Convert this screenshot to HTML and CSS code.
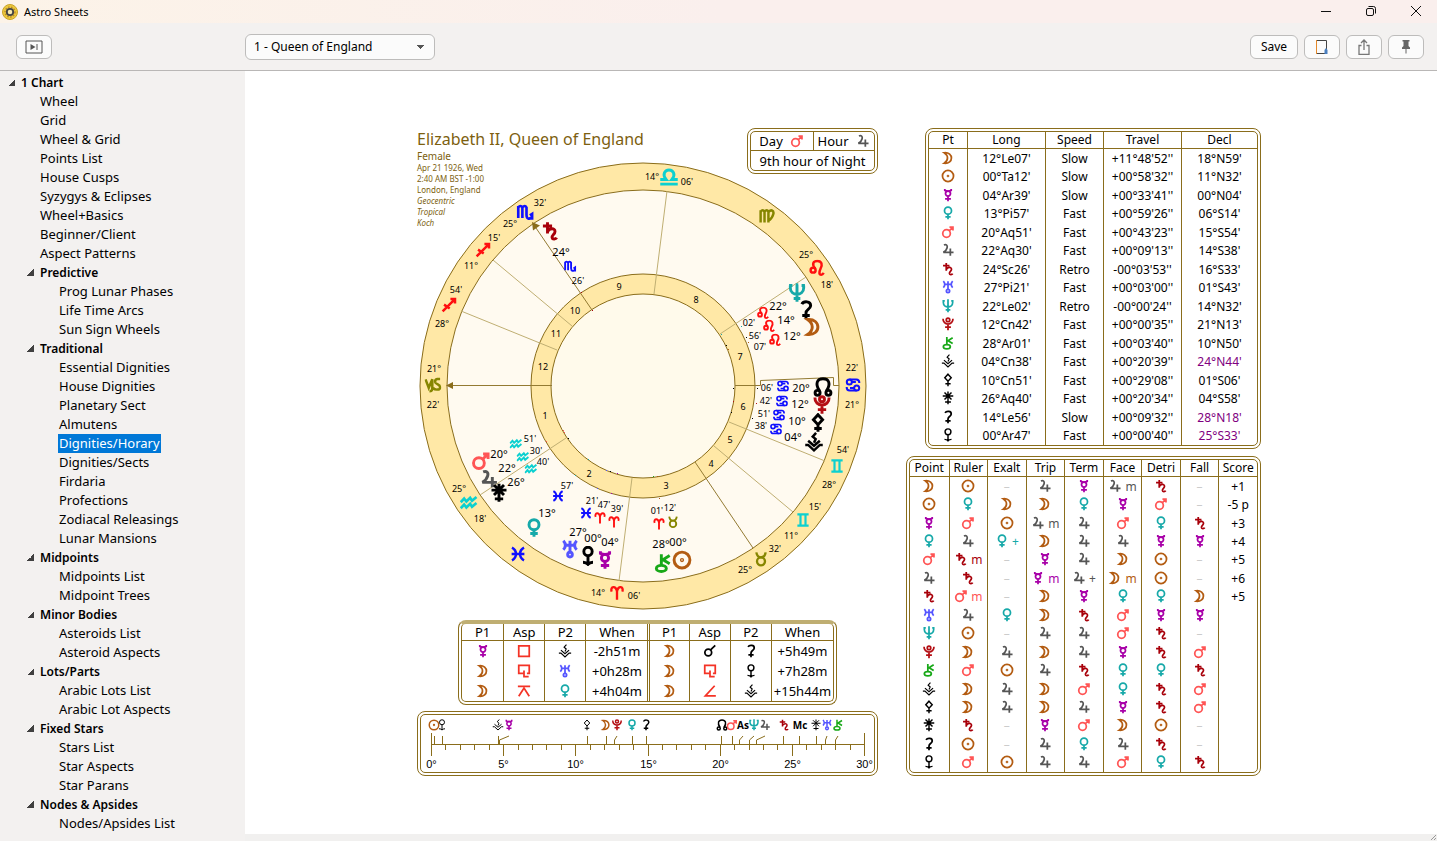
FILE: index.html
```html
<!DOCTYPE html>
<html lang="en">
<head>
<meta charset="utf-8">
<title>Astro Sheets</title>
<link rel="stylesheet" href="styles.css">
</head>
<body>
<header class="titlebar">
  <svg class="app-icon" viewBox="0 0 16 16"><circle cx="8" cy="8" r="7.5" fill="#ecc93c" stroke="#c9a227"/><circle cx="8" cy="8" r="5" fill="none" stroke="#b9862a" stroke-width="1.4" stroke-dasharray="1.5 1.5"/><circle cx="8" cy="8" r="3.2" fill="#f6e9b0" stroke="#444" stroke-width="1.8"/></svg>
  <span class="app-name">Astro Sheets</span>
  <div class="window-buttons">
    <button aria-label="Minimize"><svg viewBox="0 0 12 12"><path d="M1 6.5h10"/></svg></button>
    <button aria-label="Restore"><svg viewBox="0 0 12 12"><rect x="1.5" y="3.5" width="7" height="7" rx="1.5"/><path d="M3.5 1.5H8.500Q10.500 1.500 10.500 3.500V8.500"/></svg></button>
    <button aria-label="Close"><svg viewBox="0 0 12 12"><path d="M1 1l10 10M11 1L1 11"/></svg></button>
  </div>
</header>
<div class="toolbar">
  <div class="toolbar-left">
    <button class="tool" aria-label="Toggle sidebar"><svg viewBox="0 0 18 14"><path d="M1 1h16v12H1z" fill="none" stroke="#555"/><path d="M5.500 4v6l5-3z" fill="#555"/><path d="M12 4v6" stroke="#555"/></svg></button>
  </div>
  <select class="chart-select" aria-label="Chart"><option>1 - Queen of England</option></select>
  <div class="toolbar-right">
    <button class="tool save">Save</button>
    <button class="tool" aria-label="Page color"><svg viewBox="0 0 16 16"><path d="M2.500 1.500h10v13h-10z" fill="none" stroke="#444"/><path d="M2.500 1v14" stroke="#e58a2c"/><path d="M10.500 15V11l1.500-2 1.500 2v4z" fill="#4a7fc0"/></svg></button>
    <button class="tool" aria-label="Share"><svg viewBox="0 0 16 16" fill="none" stroke="#777" stroke-width="1.300"><path d="M5.500 6.500H3v9h10v-9h-2.500M8 11V1M5 4l3-3 3 3"/></svg></button>
    <button class="tool" aria-label="Pin"><svg viewBox="0 0 16 16" fill="#666"><path d="M4.500 1h7v1.500h-1V7l1.500 1.500V10H8.500v4.500h-1V10H4V8.500L5.500 7V2.500h-1z"/></svg></button>
  </div>
</div>
<div class="workspace">
  <nav class="sidebar" aria-label="Sheets"><ul class="tree" id="tree"></ul></nav>
  <main class="page">
    <div class="sheet">
      <div class="column-left">
        <section class="chart">
          <div class="chart-head">
            <div class="birth">
              <h1>Elizabeth II, Queen of England</h1>
              <p class="sex">Female</p>
              <p>Apr 21 1926, Wed</p>
              <p>2:40 AM BST -1:00</p>
              <p>London, England</p>
              <p><em>Geocentric</em></p>
              <p><em>Tropical</em></p>
              <p><em>Koch</em></p>
            </div>
            <table class="boxed hours">
              <tbody>
                <tr><td>Day <svg class="glyph ma"><use href="#ma"/></svg></td><td>Hour <svg class="glyph ju"><use href="#ju"/></svg></td></tr>
                <tr><td colspan="2">9th hour of Night</td></tr>
              </tbody>
            </table>
          </div>
          <svg class="wheel" id="wheel" viewBox="-226 -226 461 450" role="img" aria-label="Chart wheel"></svg>
        </section>
        <table class="boxed aspects" id="aspects">
          <thead><tr><th>P1</th><th>Asp</th><th>P2</th><th class="wide">When</th><th>P1</th><th>Asp</th><th>P2</th><th class="wide">When</th></tr></thead>
          <tbody></tbody>
        </table>
        <div class="boxed ruler-box"><svg class="ruler" id="ruler" viewBox="0 0 453 57" role="img" aria-label="Degree ruler"></svg></div>
      </div>
      <div class="column-right">
        <table class="boxed motion" id="motion">
          <thead><tr><th class="pt">Pt</th><th class="mid">Long</th><th class="speed">Speed</th><th class="mid">Travel</th><th>Decl</th></tr></thead>
          <tbody></tbody>
        </table>
        <table class="boxed dignities" id="dignities">
          <thead><tr><th>Point</th><th>Ruler</th><th>Exalt</th><th>Trip</th><th>Term</th><th>Face</th><th>Detri</th><th>Fall</th><th>Score</th></tr></thead>
          <tbody></tbody>
        </table>
      </div>
    </div>
    <footer class="status"><svg viewBox="0 0 7 7"><path d="M6 1L1 6M6 4L4 6" stroke="#999"/></svg></footer>
  </main>
</div>

<svg class="defs" aria-hidden="true">
  <symbol id="su" viewBox="0 0 24 24"><circle cx="12" cy="12" r="9.500"/><circle cx="12" cy="12" r=".8"/></symbol>
  <symbol id="mo" viewBox="0 0 24 24"><path d="M5.500 3C22 1.500 22 22.500 5.500 21C13 16 13 8 5.500 3Z"/></symbol>
  <symbol id="me" viewBox="0 0 24 24"><circle cx="12" cy="9.500" r="4.300"/><path d="M6.500 1.500V4Q12 6.500 17.500 4V1.500M12 14v8.500M7 18.500h10"/></symbol>
  <symbol id="ve" viewBox="0 0 24 24"><circle cx="12" cy="8" r="6"/><path d="M12 14v8.500M7.500 18.500h9"/></symbol>
  <symbol id="ma" viewBox="0 0 24 24"><circle cx="9.500" cy="14.500" r="6.500"/><path d="M14 10l6-6M14.500 3.500h6v6"/></symbol>
  <symbol id="ju" viewBox="0 0 24 24"><path d="M5 3.500C9 2 11.500 4 10.500 8C9.500 12 7 14.500 4 16H21.500M16 9.500V22"/></symbol>
  <symbol id="sa" viewBox="0 0 24 24"><path d="M3.500 6h11M9 1.500V15M9 13C11 8.500 18 8 18 12.500C18 16 14 16.500 14.500 20C15 22.500 19 22 20 20"/></symbol>
  <symbol id="ur" viewBox="0 0 24 24"><path d="M4 2Q9 7.500 4 13M20 2Q15 7.500 20 13M6 7.500H18M12 2V15.500"/><circle cx="12" cy="18.700" r="2.800"/></symbol>
  <symbol id="ne" viewBox="0 0 24 24"><path d="M4 3V6C4 16 20 16 20 6V3M12 2V22.500M8 18.500h8M2.500 3h4M17.500 3h4M10.500 2h3"/></symbol>
  <symbol id="pl" viewBox="0 0 24 24"><path d="M3.500 3C3 15 21 15 20.500 3M12 12V22.500M7 17.500h10"/><circle cx="12" cy="5" r="3"/></symbol>
  <symbol id="ch" viewBox="0 0 24 24"><path d="M10 1.500V14.500M20 3L12 8L20 13"/><ellipse cx="10" cy="18.500" rx="6" ry="3.700"/></symbol>
  <symbol id="vs" viewBox="0 0 24 24"><path d="M1.500 15.500H5L12 22L19 15.500H22.500M5 10.500L12 16.500L19 10.500M14.500 1L10.500 5.500L14 8.500L12 13"/></symbol>
  <symbol id="pa" viewBox="0 0 24 24"><path d="M12 2L17.500 8L12 14L6.500 8ZM12 14V22.500M7.500 18.500h9"/></symbol>
  <symbol id="jn" viewBox="0 0 24 24"><path d="M12 1V22.500M3 8.500h18M6 2.500l12 12M18 2.500l-12 12M7 19h10"/></symbol>
  <symbol id="ce" viewBox="0 0 24 24"><path d="M7 5C9 1 18 1 17.500 7C17 11.500 12 11 12 15.500V22.500M7.500 18.500h9"/></symbol>
  <symbol id="er" viewBox="0 0 24 24"><circle cx="12" cy="6.500" r="5"/><path d="M12 11.500V22M6 19.500Q10 19.500 12 22Q14 19.500 18 19.500"/></symbol>
  <symbol id="no" viewBox="0 0 24 24"><path d="M8 17C2 8 5 2 12 2C19 2 22 8 16 17"/><circle cx="5.500" cy="19" r="3"/><circle cx="18.500" cy="19" r="3"/></symbol>

  <symbol id="ari" viewBox="0 0 24 24"><path d="M4 10C1 2 11 0 12 10V22M20 10C23 2 13 0 12 10"/></symbol>
  <symbol id="tau" viewBox="0 0 24 24"><circle cx="12" cy="15.500" r="6"/><path d="M5 2C6 8 9 9.500 12 9.500C15 9.500 18 8 19 2"/></symbol>
  <symbol id="gem" viewBox="0 0 24 24"><path d="M3 3H21M3 21H21M8 3V21M16 3V21"/></symbol>
  <symbol id="can" viewBox="0 0 24 24"><circle cx="6.500" cy="7.500" r="3.800"/><circle cx="17.500" cy="16.500" r="3.800"/><path d="M6.500 3.700H17Q21.500 3.700 21.500 9M17.500 20.300H7Q2.500 20.300 2.500 15M10.300 7.500h6M7.500 16.500h6"/></symbol>
  <symbol id="leo" viewBox="0 0 24 24"><circle cx="6.500" cy="15" r="3.500"/><path d="M9.500 13C4 6 7 2 12.500 2C19 2 20 8 17 13C14.500 18 15 21.500 18 21.500Q20 21.500 21.500 19"/></symbol>
  <symbol id="vir" viewBox="0 0 24 24"><path d="M3 21V4M3 6Q6 2 8.500 6V21M8.500 6Q12 2 14 6V21M14 7C17 2 22 4 21 9C20 14 17 17 14 19"/></symbol>
  <symbol id="lib" viewBox="0 0 24 24"><path d="M1.500 20.500H22.500M1.500 15H8.500C3.500 9 7 3.500 12 3.500C17 3.500 20.500 9 15.500 15H22.500"/></symbol>
  <symbol id="sco" viewBox="0 0 24 24"><path d="M3 20V4M3 6Q6 2 8.500 6V20M8.500 6Q12 2 14 6V16C14 22 19 22 21 19M18.500 16.500L21.500 14.500V20.500H17.500"/></symbol>
  <symbol id="sag" viewBox="0 0 24 24"><path d="M3 21L20 4M14 3.500H20.500V10M5 11.500L13 17"/></symbol>
  <symbol id="cap" viewBox="0 0 24 24"><path d="M1.500 4L6 16L11 4V17Q11 21 7 21M22 3.500H18Q14.500 4 15 8C15.500 11 22 11 22 15C22 19.500 15 19.500 12 16"/></symbol>
  <symbol id="aqu" viewBox="0 0 24 24"><path d="M1 11L5.500 6L8.500 10L13.500 5L16 9L22 4M1 19L5.500 14L8.500 18L13.500 13L16 17L22 12"/></symbol>
  <symbol id="pis" viewBox="0 0 24 24"><path d="M3.500 3C11 7 11 17 3.500 21M20.500 3C13 7 13 17 20.500 21M3 12H21"/></symbol>

  <symbol id="squ" viewBox="0 0 24 24"><path d="M3 3H21V21H3Z"/></symbol>
  <symbol id="ses" viewBox="0 0 24 24"><path d="M12 16H3V2.500H21V16H17M12 11V21.500H20"/></symbol>
  <symbol id="qui" viewBox="0 0 24 24"><path d="M1.500 4H22.500M3 21L12 7L21 21"/></symbol>
  <symbol id="con" viewBox="0 0 24 24"><circle cx="9" cy="14.500" r="5.800"/><path d="M13 10L21 2.500"/></symbol>
  <symbol id="sem" viewBox="0 0 24 24"><path d="M20 3L4 20.500H22"/></symbol>
</svg>
<script src="app.js"></script>
</body>
</html>
```

FILE: styles.css
```css
* { box-sizing: border-box; }

:root {
  --line: #8a6d1b;
  --line-soft: #bfae72;
  --chrome: #f3f1f0;
}

body {
  margin: 0;
  height: 100vh;
  display: flex;
  flex-direction: column;
  overflow: hidden;
  background: var(--chrome);
  color: #000;
  font: 13px/19px "Noto Sans", "Open Sans", sans-serif;
}

button, select { font: inherit; color: inherit; }

.titlebar {
  display: flex;
  align-items: center;
  height: 23px;
  padding-left: 2px;
  gap: 6px;
  background: linear-gradient(90deg, #fcf3e8, #faefed 50%);
  font-size: 11px;
}
.app-icon { width: 16px; height: 16px; }
.window-buttons { margin-left: auto; display: flex; }
.window-buttons button {
  width: 45px;
  height: 22px;
  padding: 0 0 2px 2px;
  border: 0;
  background: none;
  display: flex;
  align-items: center;
  justify-content: center;
}
.window-buttons svg { width: 12px; height: 12px; fill: none; stroke: #111; }

.toolbar {
  display: flex;
  align-items: center;
  height: 48px;
  padding: 0 13px 0 16px;
  border-bottom: 1px solid #b9b7b6;
}
.toolbar-left { width: 229px; }
.toolbar-right { margin-left: auto; display: flex; gap: 6px; }
.tool {
  width: 36px;
  height: 24px;
  padding: 0;
  display: flex;
  align-items: center;
  justify-content: center;
  border: 1px solid #bdbcbb;
  border-radius: 6px;
  background: #fbfbfb;
  font-size: 12px;
}
.tool svg { width: 16px; height: 16px; }
.toolbar-left .tool svg { width: 18px; height: 14px; }
.save { width: 48px; }
.chart-select {
  appearance: none;
  width: 190px;
  height: 26px;
  padding: 0 24px 0 8px;
  border: 1px solid #bdbcbb;
  border-radius: 6px;
  font-size: 12px;
  background-color: #fbfbfb;
  background-image:
    linear-gradient(to bottom right, #555 50%, transparent 50%),
    linear-gradient(to bottom left, #555 50%, transparent 50%);
  background-repeat: no-repeat;
  background-size: 4px 4px;
  background-position: right 9px center, right 13px center;
}

.workspace { flex: 1; display: flex; min-height: 0; }

.sidebar { width: 245px; flex: none; overflow: hidden; padding: 2px 0 0 8px; }
.tree, .tree ul { list-style: none; margin: 0; padding: 0; }
.tree ul { padding-left: 19px; }
.tree .row { display: flex; align-items: center; height: 19px; }
.tree .row::before { content: ""; width: 13px; flex: none; }
.tree .group { font-weight: 600; font-size: 12px; }
.tree .group::before {
  width: 7px;
  height: 7px;
  margin-right: 6px;
  background: linear-gradient(135deg, transparent 50%, #404040 50%);
}
.tree a { color: inherit; text-decoration: none; padding: 0 1px; margin-left: -1px; }
.tree a[aria-current] { background: #0078d7; color: #fff; }

.page { flex: 1; display: flex; flex-direction: column; min-width: 0; background: #fff; }
.sheet { flex: 1; display: flex; justify-content: center; gap: 28px; padding: 57px 4px 0 0; }
.status { height: 7px; background: #f1f0ef; display: flex; justify-content: flex-end; }
.status svg { width: 7px; height: 7px; }

.column-left { width: 461px; display: flex; flex-direction: column; align-items: center; }
.column-right { width: 355px; display: flex; flex-direction: column; align-items: flex-end; gap: 7px; }

.boxed {
  border: 4px double var(--line);
  border-radius: 8px;
  border-spacing: 0;
  table-layout: fixed;
  background: #fff;
}
.boxed th, .boxed td { padding: 0; text-align: center; font-weight: 400; white-space: nowrap; vertical-align: middle; }
.boxed td + td, .boxed th + th { border-left: 1px solid var(--line); }
.boxed th { border-bottom: 1px solid var(--line); }

.chart { display: grid; width: 100%; margin-bottom: 10px; }
.chart-head, .wheel { grid-area: 1 / 1; }
.chart-head { display: flex; justify-content: space-between; align-items: flex-start; z-index: 1; }
.wheel { width: 100%; margin-top: 32px; }

.birth { color: #7d5f10; padding-top: 1px; }
.birth h1 { margin: 0; font-size: 16px; line-height: 21px; font-weight: 400; }
.birth p { margin: 0; font-size: 8px; line-height: 11px; }
.birth .sex { font-size: 10px; line-height: 12px; }

.hours { width: 131px; height: 46px; line-height: 18px; }
.hours tr + tr td { border-top: 1px solid var(--line); }
.hours .glyph { margin-left: 4px; }

.glyph {
  width: 14px;
  height: 14px;
  vertical-align: -2px;
  fill: none;
  stroke: currentColor;
  stroke-width: 3;
  overflow: visible;
}
.glyph.vs { stroke-width: 2; }
.glyph.pa, .glyph.er, .glyph.jn { stroke-width: 2.5; }
.glyph + .mark { margin-left: 3px; }

.motion { width: 336px; height: 321px; font-size: 12px; line-height: 17px; }
.motion .pt { width: 38px; }
.motion .mid { width: 78px; }
.motion .speed { width: 58px; }
.motion .out { color: #800080; }
.motion th, .dignities th { line-height: 16px; height: 16px; }
.motion td, .dignities td { height: 18px; }
.dignities { width: 355px; height: 320px; font-size: 12px; line-height: 17px; }
.dash { color: #ccc; }

.aspects { width: 379px; height: 85px; border-top: 4px solid var(--line-soft); margin-bottom: 6px; line-height: 18px; }
.aspects th { line-height: 16px; }
.aspects td { height: 20px; }
.aspects .wide { width: 62px; }
.aspects th:nth-child(5), .aspects td:nth-child(5) { border-left: 3px double var(--line); }

.ruler-box { width: 100%; }
.ruler { display: block; width: 100%; }
.ruler path { fill: none; stroke: var(--line); }
.ruler use { fill: none; stroke: currentColor; stroke-width: 3; }
.ruler .pa, .ruler .jn, .ruler .er, .ruler .vs { stroke-width: 2; }
.ruler .degree { font: 11px "Liberation Sans", Arial, sans-serif; text-anchor: middle; }
.ruler .angle { font: 700 10px "Open Sans", sans-serif; text-anchor: middle; }

.wheel use { fill: none; stroke: currentColor; stroke-width: 3.5; }
.wheel .vs, .wheel .can { stroke-width: 3; }
.zodiac { fill: #ffe8a6; stroke: var(--line); }
.field { fill: #fffaf0; stroke: var(--line); }
.core { fill: #fffaeb; stroke: var(--line); }
.cusp { fill: none; stroke: var(--line-soft); }
.axis { fill: none; stroke: #937a32; }
.arrow { fill: #8a6d1b; }
.wheel text { text-anchor: middle; dominant-baseline: central; font-size: 9px; }
.wheel .deg { font-size: 11px; }

.su, .mo { color: #b35c12; }
.me { color: #a800a8; }
.ve, .ne { color: #17a9a9; }
.ma { color: #ff5555; }
.ju { color: #555; }
.sa { color: #a8000a; }
.ur { color: #5555ff; }
.pl { color: #b40f14; }
.ch { color: #18a818; }
.ari, .leo, .sag { color: #ff1010; }
.tau, .vir, .cap { color: #868600; }
.gem, .lib, .aqu { color: #0cd0d0; }
.can, .sco, .pis { color: #1010ff; }
.squ, .ses, .qui, .sem { color: #f43326; }

.defs { position: absolute; width: 0; height: 0; }
```

FILE: app.js
```js
const glyph = id => `<svg class="glyph ${id}"><use href="#${id}"/></svg>`;
const place = (id, x, y, s) => `<use class="${id}" href="#${id}" x="${x - s / 2}" y="${y - s / 2}" width="${s}" height="${s}"/>`;
const body = id => document.querySelector(`#${id} tbody`);

/* Sidebar */
const tree = [
  ["Wheel", "Grid", "Wheel & Grid", "Points List", "House Cusps", "Syzygys & Eclipses", "Wheel+Basics", "Beginner/Client", "Aspect Patterns"],
  ["Predictive", ["Prog Lunar Phases", "Life Time Arcs", "Sun Sign Wheels"]],
  ["Traditional", ["Essential Dignities", "House Dignities", "Planetary Sect", "Almutens", "Dignities/Horary", "Dignities/Sects", "Firdaria", "Profections", "Zodiacal Releasings", "Lunar Mansions"]],
  ["Midpoints", ["Midpoints List", "Midpoint Trees"]],
  ["Minor Bodies", ["Asteroids List", "Asteroid Aspects"]],
  ["Lots/Parts", ["Arabic Lots List", "Arabic Lot Aspects"]],
  ["Fixed Stars", ["Stars List", "Star Aspects", "Star Parans"]],
  ["Nodes & Apsides", ["Nodes/Apsides List"]]
];
const current = "Dignities/Horary";
const leaf = t => `<li class="row"><a href="#"${t === current ? ' aria-current="page"' : ""}>${t.replace("&", "&amp;")}</a></li>`;
const group = (t, inner) => `<li><div class="row group">${t.replace("&", "&amp;")}</div><ul>${inner}</ul></li>`;
document.getElementById("tree").innerHTML =
  group("1 Chart", tree[0].map(leaf).join("") + tree.slice(1).map(([t, kids]) => group(t, kids.map(leaf).join(""))).join(""));

/* Planet motion */
const motion = `mo 12°Le07' Slow +11°48'52'' 18°N59'
su 00°Ta12' Slow +00°58'32'' 11°N32'
me 04°Ar39' Slow +00°33'41'' 00°N04'
ve 13°Pi57' Fast +00°59'26'' 06°S14'
ma 20°Aq51' Fast +00°43'23'' 15°S54'
ju 22°Aq30' Fast +00°09'13'' 14°S38'
sa 24°Sc26' Retro -00°03'53'' 16°S33'
ur 27°Pi21' Fast +00°03'00'' 01°S43'
ne 22°Le02' Retro -00°00'24'' 14°N32'
pl 12°Cn42' Fast +00°00'35'' 21°N13'
ch 28°Ar01' Fast +00°03'40'' 10°N50'
vs 04°Cn38' Fast +00°20'39'' 24°N44'
pa 10°Cn51' Fast +00°29'08'' 01°S06'
jn 26°Aq40' Fast +00°20'34'' 04°S58'
ce 14°Le56' Slow +00°09'32'' 28°N18'
er 00°Ar47' Fast +00°00'40'' 25°S33'`;
body("motion").innerHTML = motion.split("\n").map(line => {
  const [p, lon, speed, travel, decl] = line.split(" ");
  const out = parseInt(decl) >= 24 ? ' class="out"' : "";
  return `<tr><td>${glyph(p)}</td><td>${lon}</td><td>${speed}</td><td>${travel}</td><td${out}>${decl}</td></tr>`;
}).join("");

/* Dignities */
const dignities = `mo|su|-|ju|me|ju m|sa|-|+1
su|ve|mo|mo|ve|me|ma|-|-5 p
me|ma|su|ju m|ju|ma|ve|sa|+3
ve|ju|ve +|mo|ju|ju|me|me|+4
ma|sa m|-|me|ju|mo|su|-|+5
ju|sa|-|me m|ju +|mo m|su|-|+6
sa|ma m|-|mo|me|ve|ve|mo|+5
ur|ju|ve|mo|sa|ma|me|me|
ne|su|-|ju|ju|ma|sa|-|
pl|mo|ju|mo|ju|me|sa|ma|
ch|ma|su|ju|sa|ve|ve|sa|
vs|mo|ju|mo|ma|ve|sa|ma|
pa|mo|ju|mo|ju|me|sa|ma|
jn|sa|-|me|ma|mo|su|-|
ce|su|-|ju|ve|ju|sa|-|
er|ma|su|ju|ju|ma|ve|sa|`;
const dignityCell = c => {
  if (c === "-") return '<span class="dash">–</span>';
  const [p, mark] = c.split(" ");
  return glyph(p) + (mark ? `<span class="mark ${p}">${mark}</span>` : "");
};
body("dignities").innerHTML = dignities.split("\n").map(line => {
  const cells = line.split("|"), score = cells.pop();
  return `<tr>${cells.map(c => `<td>${dignityCell(c)}</td>`).join("")}<td>${score}</td></tr>`;
}).join("");

/* Moon aspects */
body("aspects").innerHTML = [
  ["me", "squ", "vs", "-2h51m", "mo", "con", "ce", "+5h49m"],
  ["mo", "ses", "ur", "+0h28m", "mo", "ses", "er", "+7h28m"],
  ["mo", "qui", "ve", "+4h04m", "mo", "sem", "vs", "+15h44m"]
].map(r => `<tr>${r.map((c, i) => `<td>${i % 4 === 3 ? c : glyph(c)}</td>`).join("")}</tr>`).join("");

/* Wheel: coordinates are relative to the wheel's centre */
const rings = [["zodiac", 223], ["field", 196], ["zodiac", 112], ["core", 92]]
  .map(([c, r]) => `<circle class="${c}" r="${r}"/>`).join("");
const cusps = [
  "M24 -195L11 -92", "M-150 -126L-71 -60", "M-182 -75L-86 -36", "M163 -109L77 -52",
  "M-163 109L-77 52", "M-24 195L-11 92", "M150 126L71 60", "M182 75L86 36"
].map(d => `<path class="cusp" d="${d}"/>`).join("");
const axes = `<path class="axis" d="M-190 -.5H-91M-107 -158L-51 -76M110 162L52 76M92 -.5H117.500V-5.500L190.500 -8.500V-.5H196"/>
<path class="arrow" d="M-197 -.5L-190 -4V3Z"/><path class="arrow" d="M-111 -164L-103 -160.500L-110 -155.500Z"/>`;
const houses = [[-98, 29], [-54, 87], [23, 99], [68, 77], [87, 53], [100, 20], [97, -30], [53, -87], [-24, -100], [-68, -76], [-87, -53], [-100, -20]]
  .map(([x, y], i) => `<text x="${x}" y="${y}">${i + 1}</text>`).join("");
const signs = [
  ["lib", 26, -209, 20, "14°", 9, -210, "06'", 44, -205],
  ["vir", 124, -170, 17],
  ["leo", 174, -118, 17, "25°", 163, -132, "18'", 184, -102],
  ["can", 210, -1, 16, "22'", 209, -19, "21°", 209, 18],
  ["gem", 194, 80, 15, "54'", 200, 63, "28°", 186, 98],
  ["gem", 160, 134, 15, "15'", 172, 120, "11°", 148, 149],
  ["tau", 118, 173, 16, "32'", 132, 162, "25°", 102, 183],
  ["ari", -26, 207, 16, "14°", -45, 206, "06'", -9, 209],
  ["pis", -125, 168, 17],
  ["aqu", -174, 117, 18, "25°", -184, 102, "18'", -163, 132],
  ["cap", -210, -1, 17, "21°", -209, -18, "22'", -210, 18],
  ["sag", -194, -81, 17, "54'", -187, -97, "28°", -201, -63],
  ["sag", -160, -136, 17, "15'", -149, -149, "11°", -172, -121],
  ["sco", -118, -174, 18, "32'", -103, -184, "25°", -133, -163]
].map(([s, x, y, size, ...t]) => {
  let out = place(s, x, y, size);
  for (let i = 0; i < t.length; i += 3) out += `<text x="${t[i + 1]}" y="${t[i + 2]}">${t[i]}</text>`;
  return out;
}).join("");
const planets = [
  ["sa", -93, -155, "24°", -82, -135, "sco", -73, -120, "26'", -65, -106],
  ["ne", 154, -93, "22°", 135, -81, "leo", 120, -73, "02'", 106, -64],
  ["ce", 163, -76, "14°", 143, -67, "leo", 126, -60, "56'", 112, -51],
  ["mo", 170, -59, "12°", 149, -51, "leo", 132, -46, "07'", 117, -40],
  ["no", 180, 1, "20°", 158, 1, "can", 140, 0, "06'", 124, 1],
  ["pl", 179, 19, "12°", 157, 17, "can", 139, 15, "42'", 123, 14],
  ["pa", 175, 37, "10°", 154, 34, "can", 136, 29, "51'", 121, 27],
  ["vs", 171, 56, "04°", 150, 50, "can", 133, 43, "38'", 118, 39],
  ["ma", -162, 75, "20°", -144, 67, "aqu", -127, 58, "51'", -113, 52],
  ["ju", -154, 93, "22°", -136, 81, "aqu", -120, 71, "30'", -107, 64],
  ["jn", -144, 107, "26°", -127, 95, "aqu", -112, 83, "40'", -100, 75],
  ["ve", -109, 142, "13°", -96, 126, "pis", -85, 110, "57'", -76, 99],
  ["ur", -73, 163, "27°", -65, 145, "pis", -57, 127, "21'", -51, 114],
  ["er", -55, 170, "00°", -50, 151, "ari", -43, 132, "47'", -39, 118],
  ["me", -38, 174, "04°", -33, 155, "ari", -29, 136, "39'", -26, 122],
  ["ch", 20, 177, "28°", 18, 157, "ari", 16, 138, "01'", 14, 124],
  ["su", 39, 174, "00°", 35, 155, "tau", 30, 136, "12'", 27, 121]
].map(([p, x, y, d, dx, dy, s, sx, sy, m, mx, my]) =>
  place(p, x, y, 20) + `<text class="deg" x="${dx}" y="${dy}">${d}</text>` + place(s, sx, sy, 13) + `<text x="${mx}" y="${my}">${m}</text>`).join("");
const dots = [[-79, 46, "ma"], [-80, 44, "ma"], [-75, 52, "jn"], [-55, 73, "ve"], [-37, 84, "ur"], [-33, 85, "er"], [-26, 87, "me"], [10, 90, "ch"], [14, 90, "su"],
  [90, 2, "no"], [90, 15, "pl"], [88, 26, "vs"], [78, -52, "ne"], [83, -41, "ce"], [85, -37, "mo"], [-51, -76, "sa"], [-62, -94, "sa"],
  [98, -60, "ne"], [103, -49, "ce"], [105, -44, "mo"], [114, 2, "no"], [113, 17, "pl"], [109, 32, "vs"], [-97, 55, "ma"], [-68, 89, "ve"], [-46, 102, "ur"], [-32, 107, "me"], [16, 112, "su"]]
  .map(([x, y, p]) => `<rect class="${p}" fill="currentColor" x="${x}" y="${y}" width="1" height="1"/>`).join("");
document.getElementById("wheel").innerHTML = rings + cusps + axes + dots + houses + signs + planets;

/* Degree ruler */
const left = 10.5, span = 433;
let marks = "M10.500 18V41M443.500 18V41M10 29.500H444", labels = "";
for (let d = 0; d <= 30; d++) {
  const x = Math.floor(left + span * d / 30) + 0.5;
  marks += `M${x} 29V${d % 5 ? 35 : 41}`;
  if (d % 5 === 0) labels += `<text class="degree" x="${x}" y="53">${d}°</text>`;
}
const pins = [["su", 13, 13], ["er", 21, 21], ["vs", 77, 77], ["me", 88, 78], ["pa", 166, 166], ["mo", 185, 185], ["pl", 196, 193], ["ve", 211, 211],
  ["ce", 225, 225], ["no", 301, 300], ["ma", 311, 311], ["As", 322, 318], ["ne", 333, 328], ["ju", 344, 335], ["sa", 363, 362], ["Mc", 379, 378],
  ["jn", 395, 395], ["ur", 406, 404], ["ch", 417, 414]].map(([p, x, t]) => {
  marks += Math.abs(x - t) < 2 ? `M${t + .5} 21V29` : `M${t + .5} 29V25L${x} 21`;
  return /[A-Z]/.test(p) ? `<text class="angle" x="${x}" y="14">${p}</text>` : place(p, x, 10, 12);
}).join("");
document.getElementById("ruler").innerHTML = `<path d="${marks}"/>` + labels + pins;
```
